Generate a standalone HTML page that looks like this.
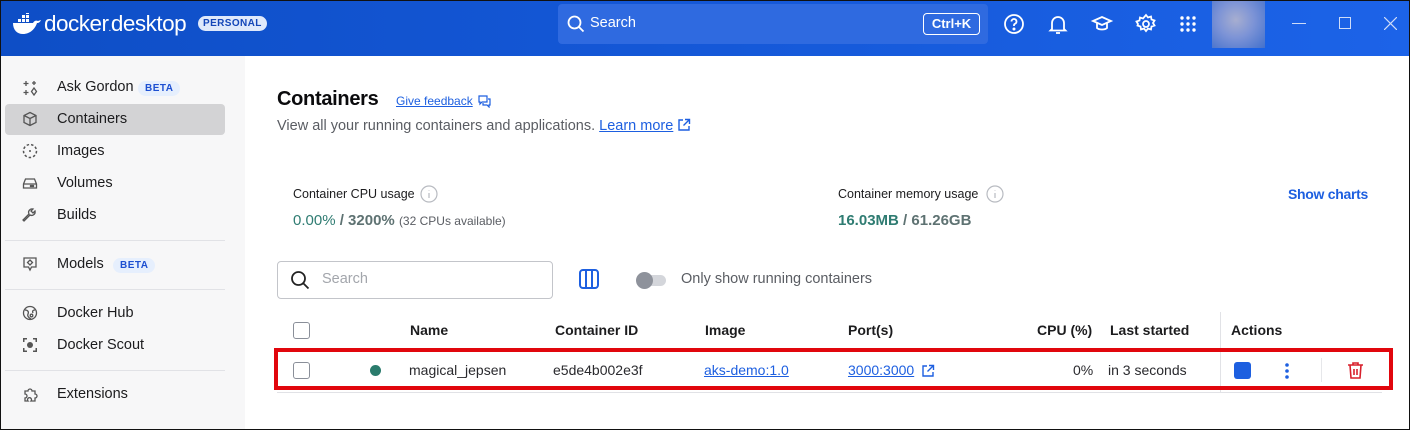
<!DOCTYPE html>
<html><head><meta charset="utf-8">
<style>
*{box-sizing:border-box;margin:0;padding:0}
html,body{width:1410px;height:430px;overflow:hidden;background:#fff}
body{font-family:"Liberation Sans",sans-serif;color:#1c1c1e;position:relative}
.frame{position:absolute;left:0;top:0;width:1410px;height:430px;border:1px solid #111;pointer-events:none;z-index:10}
.hdr{position:absolute;left:0;top:0;width:1410px;height:56px;background:linear-gradient(90deg,#0e4ec6 0%,#1457d6 45%,#1c63e8 100%)}
.abs{position:absolute}
.side{position:absolute;left:0;top:56px;width:245px;height:374px;background:#f7f7f8}
.nav{position:absolute;left:57px;font-size:14.5px;color:#1c1c1e}
.ico{position:absolute;left:22px;width:16px;height:16px}
.beta{position:absolute;font-size:10px;font-weight:bold;color:#1d4fd1;background:#e6effd;border-radius:9px;padding:2px 7px;letter-spacing:.5px}
.sep{position:absolute;left:5px;width:220px;height:1px;background:#e1e2e6}
.th{position:absolute;top:322px;font-size:14px;font-weight:bold;color:#1c1c1e}
.td{position:absolute;top:362px;font-size:14px;color:#2a2a2e}
a{color:#1d5fe0;text-decoration:underline}
.cb{position:absolute;width:17px;height:17px;border:1.5px solid #8a8f99;border-radius:3px}
</style></head><body>
<div class="hdr"></div>
<svg class="abs" style="left:12px;top:13px" width="30" height="22" viewBox="0 0 30 22">
<g fill="#fff"><rect x="6" y="6" width="3" height="3"/><rect x="10" y="6" width="3" height="3"/><rect x="14" y="6" width="3" height="3"/><rect x="10" y="2" width="3" height="3"/><rect x="14" y="2" width="3" height="3"/><rect x="14" y="-1" width="3" height="2"/>
<path d="M1 10h20c1-2 3-3 5-2l3-1c-1 2-2 3-4 3c-2 6-7 11-14 11c-6 0-10-4-10-11z"/></g></svg>
<div class="abs" style="left:44px;top:11px;font-size:22.5px;color:#fff;letter-spacing:-0.5px">docker<span style="font-size:10px">.</span>desktop</div>
<div class="abs" style="left:198px;top:16px;font-size:10px;font-weight:bold;color:#1446b8;background:#dfe9fb;border-radius:8px;padding:2px 5px;letter-spacing:.4px">PERSONAL</div>
<div class="abs" style="left:558px;top:4px;width:430px;height:40px;background:#2f6ae0;border-radius:4px"></div>
<svg class="abs" style="left:567px;top:15px" width="18" height="18" viewBox="0 0 18 18"><circle cx="7.5" cy="7.5" r="6" stroke="#fff" stroke-width="1.8" fill="none"/><path d="M12 12l4.5 4.5" stroke="#fff" stroke-width="1.8"/></svg>
<div class="abs" style="left:590px;top:15px;font-size:14.5px;color:#fff">Search</div>
<div class="abs" style="left:923px;top:13px;width:57px;height:22px;border:1.5px solid #fff;border-radius:4px;color:#fff;font-size:13px;font-weight:bold;text-align:center;line-height:19px">Ctrl+K</div>
<svg class="abs" style="left:1002px;top:12px" width="24" height="24" viewBox="0 0 24 24" fill="none" stroke="#fff" stroke-width="1.8"><circle cx="12" cy="12" r="9"/><path d="M9.5 9.5a2.5 2.5 0 1 1 3.5 2.3c-.7.3-1 .8-1 1.5v.7"/><circle cx="12" cy="17" r=".6" fill="#fff"/></svg>
<svg class="abs" style="left:1046px;top:12px" width="24" height="24" viewBox="0 0 24 24" fill="none" stroke="#fff" stroke-width="1.8"><path d="M6 17V11a6 6 0 0 1 12 0v6l1.5 1.5h-15z"/><path d="M10 21h4"/></svg>
<svg class="abs" style="left:1090px;top:12px" width="24" height="24" viewBox="0 0 24 24" fill="none" stroke="#fff" stroke-width="1.8"><path d="M3 9l9-4 9 4-9 4z"/><path d="M7 11v5c2 2 8 2 10 0v-5"/></svg>
<svg class="abs" style="left:1134px;top:12px" width="24" height="24" viewBox="0 0 24 24" fill="none" stroke="#fff" stroke-width="1.8"><circle cx="12" cy="12" r="3"/><path d="M12 3l2 2.5 3-1 .5 3 3 1-1.5 2.5 1.5 2.5-3 1-.5 3-3-1-2 2.5-2-2.5-3 1-.5-3-3-1L4 12 2.5 9.5l3-1 .5-3 3 1z"/></svg>
<svg class="abs" style="left:1178px;top:14px" width="20" height="20" viewBox="0 0 20 20" fill="#fff"><circle cx="4" cy="4" r="1.7"/><circle cx="10" cy="4" r="1.7"/><circle cx="16" cy="4" r="1.7"/><circle cx="4" cy="10" r="1.7"/><circle cx="10" cy="10" r="1.7"/><circle cx="16" cy="10" r="1.7"/><circle cx="4" cy="16" r="1.7"/><circle cx="10" cy="16" r="1.7"/><circle cx="16" cy="16" r="1.7"/></svg>
<div class="abs" style="left:1212px;top:1px;width:53px;height:47px;background:radial-gradient(circle at 45% 40%,#a7aed0 0%,#7c93d6 45%,#4270cc 100%)"></div>
<div class="abs" style="left:1292px;top:23px;width:14px;height:1.2px;background:#cfdcf8"></div>
<div class="abs" style="left:1339px;top:17px;width:12px;height:12px;border:1.2px solid #cfdcf8"></div>
<svg class="abs" style="left:1384px;top:17px" width="13" height="13" viewBox="0 0 13 13" stroke="#cfdcf8" stroke-width="1.2"><path d="M0 0l13 13M13 0L0 13"/></svg>

<div class="side"></div>
<div class="abs" style="left:5px;top:104px;width:220px;height:31px;background:#d3d3d5;border-radius:4px"></div>
<svg class="ico" style="top:80px" viewBox="0 0 16 16" fill="none" stroke="#555" stroke-width="1.3"><path d="M4 1v5M1.5 3.5h5M12 1v4M10 3h4M4 10v5M1.5 12.5h5"/><path d="M12 8l2.5 3.5L12 15l-2.5-3.5z"/></svg>
<div class="nav" style="top:79px">Ask Gordon</div><div class="beta" style="left:138px;top:81px">BETA</div>
<svg class="ico" style="top:111px" viewBox="0 0 16 16" fill="none" stroke="#555" stroke-width="1.3"><path d="M8 1.5l6 3v7l-6 3-6-3v-7z"/><path d="M2 4.5l6 3 6-3M8 7.5v7"/></svg>
<div class="nav" style="top:111px">Containers</div>
<svg class="ico" style="top:143px" viewBox="0 0 16 16" fill="none" stroke="#555" stroke-width="1.5" stroke-dasharray="2.5 2"><circle cx="8" cy="8" r="6.5"/><circle cx="8" cy="8" r="1" fill="#555" stroke="none"/></svg>
<div class="nav" style="top:143px">Images</div>
<svg class="ico" style="top:175px" viewBox="0 0 16 16" fill="none" stroke="#555" stroke-width="1.3"><path d="M1.5 9l2-5h9l2 5v4h-13z M1.5 9h13"/><circle cx="11" cy="11" r=".6" fill="#555"/><circle cx="9" cy="11" r=".6" fill="#555"/></svg>
<div class="nav" style="top:175px">Volumes</div>
<svg class="ico" style="top:207px" viewBox="0 0 16 16" fill="none" stroke="#555" stroke-width="1.3"><path d="M2 14l6-6a3.5 3.5 0 0 0 5-4l-2 2-2-2 2-2a3.5 3.5 0 0 0-4 5l-6 6z"/></svg>
<div class="nav" style="top:207px">Builds</div>
<div class="sep" style="top:240px"></div>
<svg class="ico" style="top:256px" viewBox="0 0 16 16" fill="none" stroke="#555" stroke-width="1.3"><path d="M2 2h12v9H9.5L8 14l-1.5-3H2z"/><path d="M8 4l2.5 2.5L8 9 5.5 6.5z"/></svg>
<div class="nav" style="top:256px">Models</div><div class="beta" style="left:113px;top:258px">BETA</div>
<div class="sep" style="top:289px"></div>
<svg class="ico" style="top:305px" viewBox="0 0 16 16" fill="none" stroke="#555" stroke-width="1.3"><circle cx="8" cy="8" r="6.5"/><path d="M3 5c3 0 4 2 3 4s1 4 3 5M13 5c-2 0-3 1-2 3"/><circle cx="9.5" cy="10.5" r="1.3"/></svg>
<div class="nav" style="top:305px">Docker Hub</div>
<svg class="ico" style="top:337px" viewBox="0 0 16 16" fill="#555"><circle cx="8" cy="8" r="3"/><path d="M1 1h4v1.5H2.5V5H1zM11 1h4v4h-1.5V2.5H11zM1 11h1.5v2.5H5V15H1zM13.5 11H15v4h-4v-1.5h2.5z"/></svg>
<div class="nav" style="top:337px">Docker Scout</div>
<div class="sep" style="top:370px"></div>
<svg class="ico" style="top:386px" viewBox="0 0 16 16" fill="none" stroke="#555" stroke-width="1.3"><path d="M3 5h3a2 2 0 1 1 4 0h3v3a2 2 0 1 1 0 4v3H9a2 2 0 1 0-3 0H3v-3a2 2 0 1 0 0-4z"/></svg>
<div class="nav" style="top:386px">Extensions</div>

<div class="abs" style="left:277px;top:88px;font-size:20px;font-weight:bold;color:#0b0b0d;letter-spacing:-.3px">Containers</div>
<div class="abs" style="left:396px;top:94px;font-size:12px"><a>Give feedback</a></div>
<svg class="abs" style="left:478px;top:95px" width="13" height="13" viewBox="0 0 13 13" fill="none" stroke="#1d5fe0" stroke-width="1.2"><path d="M1 1h8v6H4l-2 2V7H1z"/><path d="M10 4h2v6h-1v2l-2-2H5V8"/></svg>
<div class="abs" style="left:277px;top:118px;font-size:14.5px;color:#5a5d63;white-space:nowrap">View all your running containers and applications. <a>Learn more</a> <svg style="vertical-align:-2px" width="14" height="14" viewBox="0 0 14 14" fill="none" stroke="#1d5fe0" stroke-width="1.4"><path d="M6 2H2v10h10V8M8 1.5h4.5V6M12.5 1.5L6.5 7.5"/></svg></div>

<div class="abs" style="left:293px;top:187px;font-size:12.5px;color:#1c1c1e">Container CPU usage</div>
<svg class="abs" style="left:420px;top:185px" width="18" height="18" viewBox="0 0 18 18" fill="none" stroke="#b8bbc1" stroke-width="1.2"><circle cx="9" cy="9" r="8"/><path d="M9 8v5M9 5.5v.5"/></svg>
<div class="abs" style="left:293px;top:212px;font-size:15px;color:#2f7c72;font-weight:bold"><span style="font-weight:normal">0.00%</span> <span style="color:#5e7272">/ 3200%</span> <span style="font-size:12px;font-weight:normal;color:#5a5d63">(32 CPUs available)</span></div>
<div class="abs" style="left:838px;top:187px;font-size:12.5px;color:#1c1c1e">Container memory usage</div>
<svg class="abs" style="left:986px;top:185px" width="18" height="18" viewBox="0 0 18 18" fill="none" stroke="#b8bbc1" stroke-width="1.2"><circle cx="9" cy="9" r="8"/><path d="M9 8v5M9 5.5v.5"/></svg>
<div class="abs" style="left:838px;top:212px;font-size:15px;color:#2f7c72;font-weight:bold">16.03MB <span style="color:#5e7272">/ 61.26GB</span></div>
<div class="abs" style="left:1288px;top:186px;font-size:14px;color:#1d5fe0;font-weight:bold;letter-spacing:-.3px">Show charts</div>

<div class="abs" style="left:277px;top:261px;width:276px;height:38px;border:1px solid #c3c5ca;border-radius:4px"></div>
<svg class="abs" style="left:290px;top:270px" width="20" height="20" viewBox="0 0 20 20" fill="none" stroke="#222" stroke-width="1.8"><circle cx="8.5" cy="8.5" r="6.5"/><path d="M13.5 13.5l5 5"/></svg>
<div class="abs" style="left:322px;top:271px;font-size:14.5px;color:#a3a6ac">Search</div>
<svg class="abs" style="left:578px;top:268px" width="22" height="22" viewBox="0 0 22 22" fill="none" stroke="#1d5fe0" stroke-width="2"><rect x="2" y="2" width="18" height="18" rx="3"/><path d="M8 2v18M14 2v18"/></svg>
<div class="abs" style="left:638px;top:275px;width:28px;height:11px;background:#d4d6db;border-radius:6px"></div>
<div class="abs" style="left:636px;top:272px;width:17px;height:17px;background:#8e929b;border-radius:50%"></div>
<div class="abs" style="left:681px;top:271px;font-size:14.5px;color:#5a5d63">Only show running containers</div>

<div class="cb" style="left:293px;top:322px"></div>
<div class="th" style="left:410px">Name</div>
<div class="th" style="left:555px">Container ID</div>
<div class="th" style="left:705px">Image</div>
<div class="th" style="left:848px">Port(s)</div>
<div class="th" style="left:1037px">CPU (%)</div>
<div class="th" style="left:1110px">Last started</div>
<div class="abs" style="left:1220px;top:312px;width:1px;height:80px;background:#e1e2e6"></div>
<div class="th" style="left:1231px">Actions</div>
<div class="abs" style="left:277px;top:348px;width:1105px;height:1px;background:#e1e2e6"></div>
<div class="abs" style="left:277px;top:392px;width:1105px;height:1px;background:#e1e2e6"></div>
<div class="cb" style="left:293px;top:362px"></div>
<div class="abs" style="left:370px;top:365px;width:11px;height:11px;border-radius:50%;background:#2a7b6c"></div>
<div class="td" style="left:409px">magical_jepsen</div>
<div class="td" style="left:553px">e5de4b002e3f</div>
<div class="td" style="left:704px"><a>aks-demo:1.0</a></div>
<div class="td" style="left:848px"><a>3000:3000</a></div>
<svg class="abs" style="left:921px;top:364px" width="14" height="14" viewBox="0 0 14 14" fill="none" stroke="#1d5fe0" stroke-width="1.4"><path d="M6 2H2v10h10V8M8 1.5h4.5V6M12.5 1.5L6.5 7.5"/></svg>
<div class="td" style="left:1073px">0%</div>
<div class="td" style="left:1108px">in 3 seconds</div>
<div class="abs" style="left:1234px;top:362px;width:17px;height:17px;background:#1d5fe0;border-radius:3px"></div>
<svg class="abs" style="left:1283px;top:362px" width="8" height="18" viewBox="0 0 8 18" fill="#1d5fe0"><circle cx="4" cy="3" r="1.8"/><circle cx="4" cy="9" r="1.8"/><circle cx="4" cy="15" r="1.8"/></svg>
<div class="abs" style="left:1321px;top:358px;width:1px;height:24px;background:#e6e7ea"></div>
<svg class="abs" style="left:1346px;top:361px" width="19" height="19" viewBox="0 0 19 19" fill="none" stroke="#d8202c" stroke-width="1.6"><path d="M2 4h15M7 4V2h5v2M4 4l1 13h9l1-13M8 8v6M11 8v6"/></svg>

<div class="abs" style="left:274px;top:348px;width:1119px;height:42px;border:4px solid #e1060d"></div>
<div class="frame"></div>
</body></html>
